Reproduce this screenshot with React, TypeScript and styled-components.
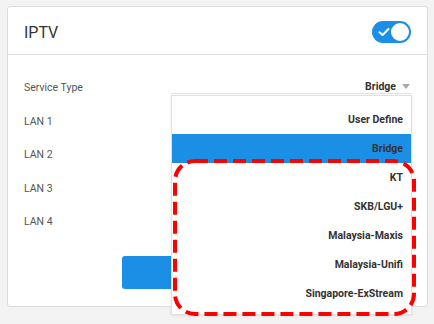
import React from 'react';
import styled, { createGlobalStyle } from 'styled-components';

const GlobalStyle = createGlobalStyle`
  html, body, #root {
    min-height: 100vh;
  }
  body {
    margin: 0;
    background: #f3f3f3;
    font-family: Roboto, "Liberation Sans", sans-serif;
  }
`;

const Card = styled.div`
  position: relative;
  box-sizing: border-box;
  width: 421px;
  height: 301px;
  margin: 6px 0 0 7px;
  background: #fff;
  border: 1px solid #dcdcdc;
  border-radius: 3px;
`;

const Header = styled.div`
  display: flex;
  align-items: center;
  justify-content: space-between;
  height: 47px;
  padding: 0 16px;
  border-bottom: 1px solid #e0e0e0;
`;

const Title = styled.h2`
  margin: 3px 0 0;
  font-size: 16px;
  font-weight: 400;
  color: #333;
`;

const Toggle = styled.div`
  position: relative;
  width: 39px;
  height: 22px;
  margin-top: 2px;
  border-radius: 11px;
  background: #1b8ee6;
`;

const Knob = styled.div`
  position: absolute;
  top: 2px;
  right: 2px;
  width: 18px;
  height: 18px;
  border-radius: 50%;
  background: #fff;
`;

const Check = styled.svg`
  position: absolute;
  left: 6px;
  top: 6px;
`;

const Body = styled.div`
  padding: 16px 16px 0;
`;

const Row = styled.div`
  display: flex;
  align-items: center;
  justify-content: space-between;
  height: 33.5px;
`;

const Label = styled.span`
  font-size: 10.5px;
  color: #555;
`;

const Select = styled.div`
  position: relative;
  display: flex;
  align-items: center;
  justify-content: flex-end;
  gap: 6px;
  width: 240px;
  height: 14px;
  margin-top: -2px;
  border-bottom: 1px solid #e2e2e2;
  font-size: 10.5px;
  font-weight: 700;
  color: #333;
`;

const Caret = styled.span`
  width: 0;
  height: 0;
  margin-right: 1px;
  border-left: 4px solid transparent;
  border-right: 4px solid transparent;
  border-top: 5px solid #a8a8a8;
`;

const Menu = styled.ul`
  position: absolute;
  top: calc(100% + 2px);
  left: 0;
  z-index: 2;
  box-sizing: border-box;
  width: 241px;
  margin: 0;
  padding: 9px 0 6px;
  list-style: none;
  background: #fff;
  border: 1px solid #e0e0e0;
  box-shadow: 0 1px 3px rgba(0, 0, 0, 0.08);
`;

const Item = styled.li<{ $active?: boolean }>`
  height: 29px;
  line-height: 29px;
  padding-right: 8px;
  text-align: right;
  font-size: 10.5px;
  font-weight: 700;
  color: #333;
  background: ${({ $active }) => ($active ? '#1b8ee6' : 'transparent')};
`;

const Highlight = styled.svg`
  position: absolute;
  left: 0;
  top: 63px;
  pointer-events: none;
`;

const ButtonRow = styled.div`
  display: flex;
  justify-content: center;
  margin-top: 17px;
`;

const ApplyButton = styled.button`
  width: 192px;
  height: 33px;
  border: none;
  border-radius: 3px;
  background: #1b8ee6;
  color: #fff;
  font-family: inherit;
  font-size: 12px;
`;

const options = [
  'User Define',
  'Bridge',
  'KT',
  'SKB/LGU+',
  'Malaysia-Maxis',
  'Malaysia-Unifi',
  'Singapore-ExStream',
];

export default function App() {
  return (
    <>
      <GlobalStyle />
      <Card>
        <Header>
          <Title>IPTV</Title>
          <Toggle>
            <Check width="12" height="10" viewBox="0 0 12 10">
              <path d="M1.5 5.2 L4.6 8 L10.5 2" fill="none" stroke="#fff" strokeWidth="2" strokeLinecap="round" strokeLinejoin="round" />
            </Check>
            <Knob />
          </Toggle>
        </Header>
        <Body>
          <Row>
            <Label>Service Type</Label>
            <Select>
              Bridge
              <Caret />
              <Menu>
                {options.map((o) => (
                  <Item key={o} $active={o === 'Bridge'}>
                    {o}
                  </Item>
                ))}
                <Highlight width="245" height="157" viewBox="0 0 245 157">
                  <rect x="3" y="2" width="239" height="153" rx="20" fill="none" stroke="#f00" strokeWidth="4" strokeDasharray="13 6" />
                </Highlight>
              </Menu>
            </Select>
          </Row>
          <Row><Label>LAN 1</Label></Row>
          <Row><Label>LAN 2</Label></Row>
          <Row><Label>LAN 3</Label></Row>
          <Row><Label>LAN 4</Label></Row>
          <ButtonRow>
            <ApplyButton>Save</ApplyButton>
          </ButtonRow>
        </Body>
      </Card>
    </>
  );
}
